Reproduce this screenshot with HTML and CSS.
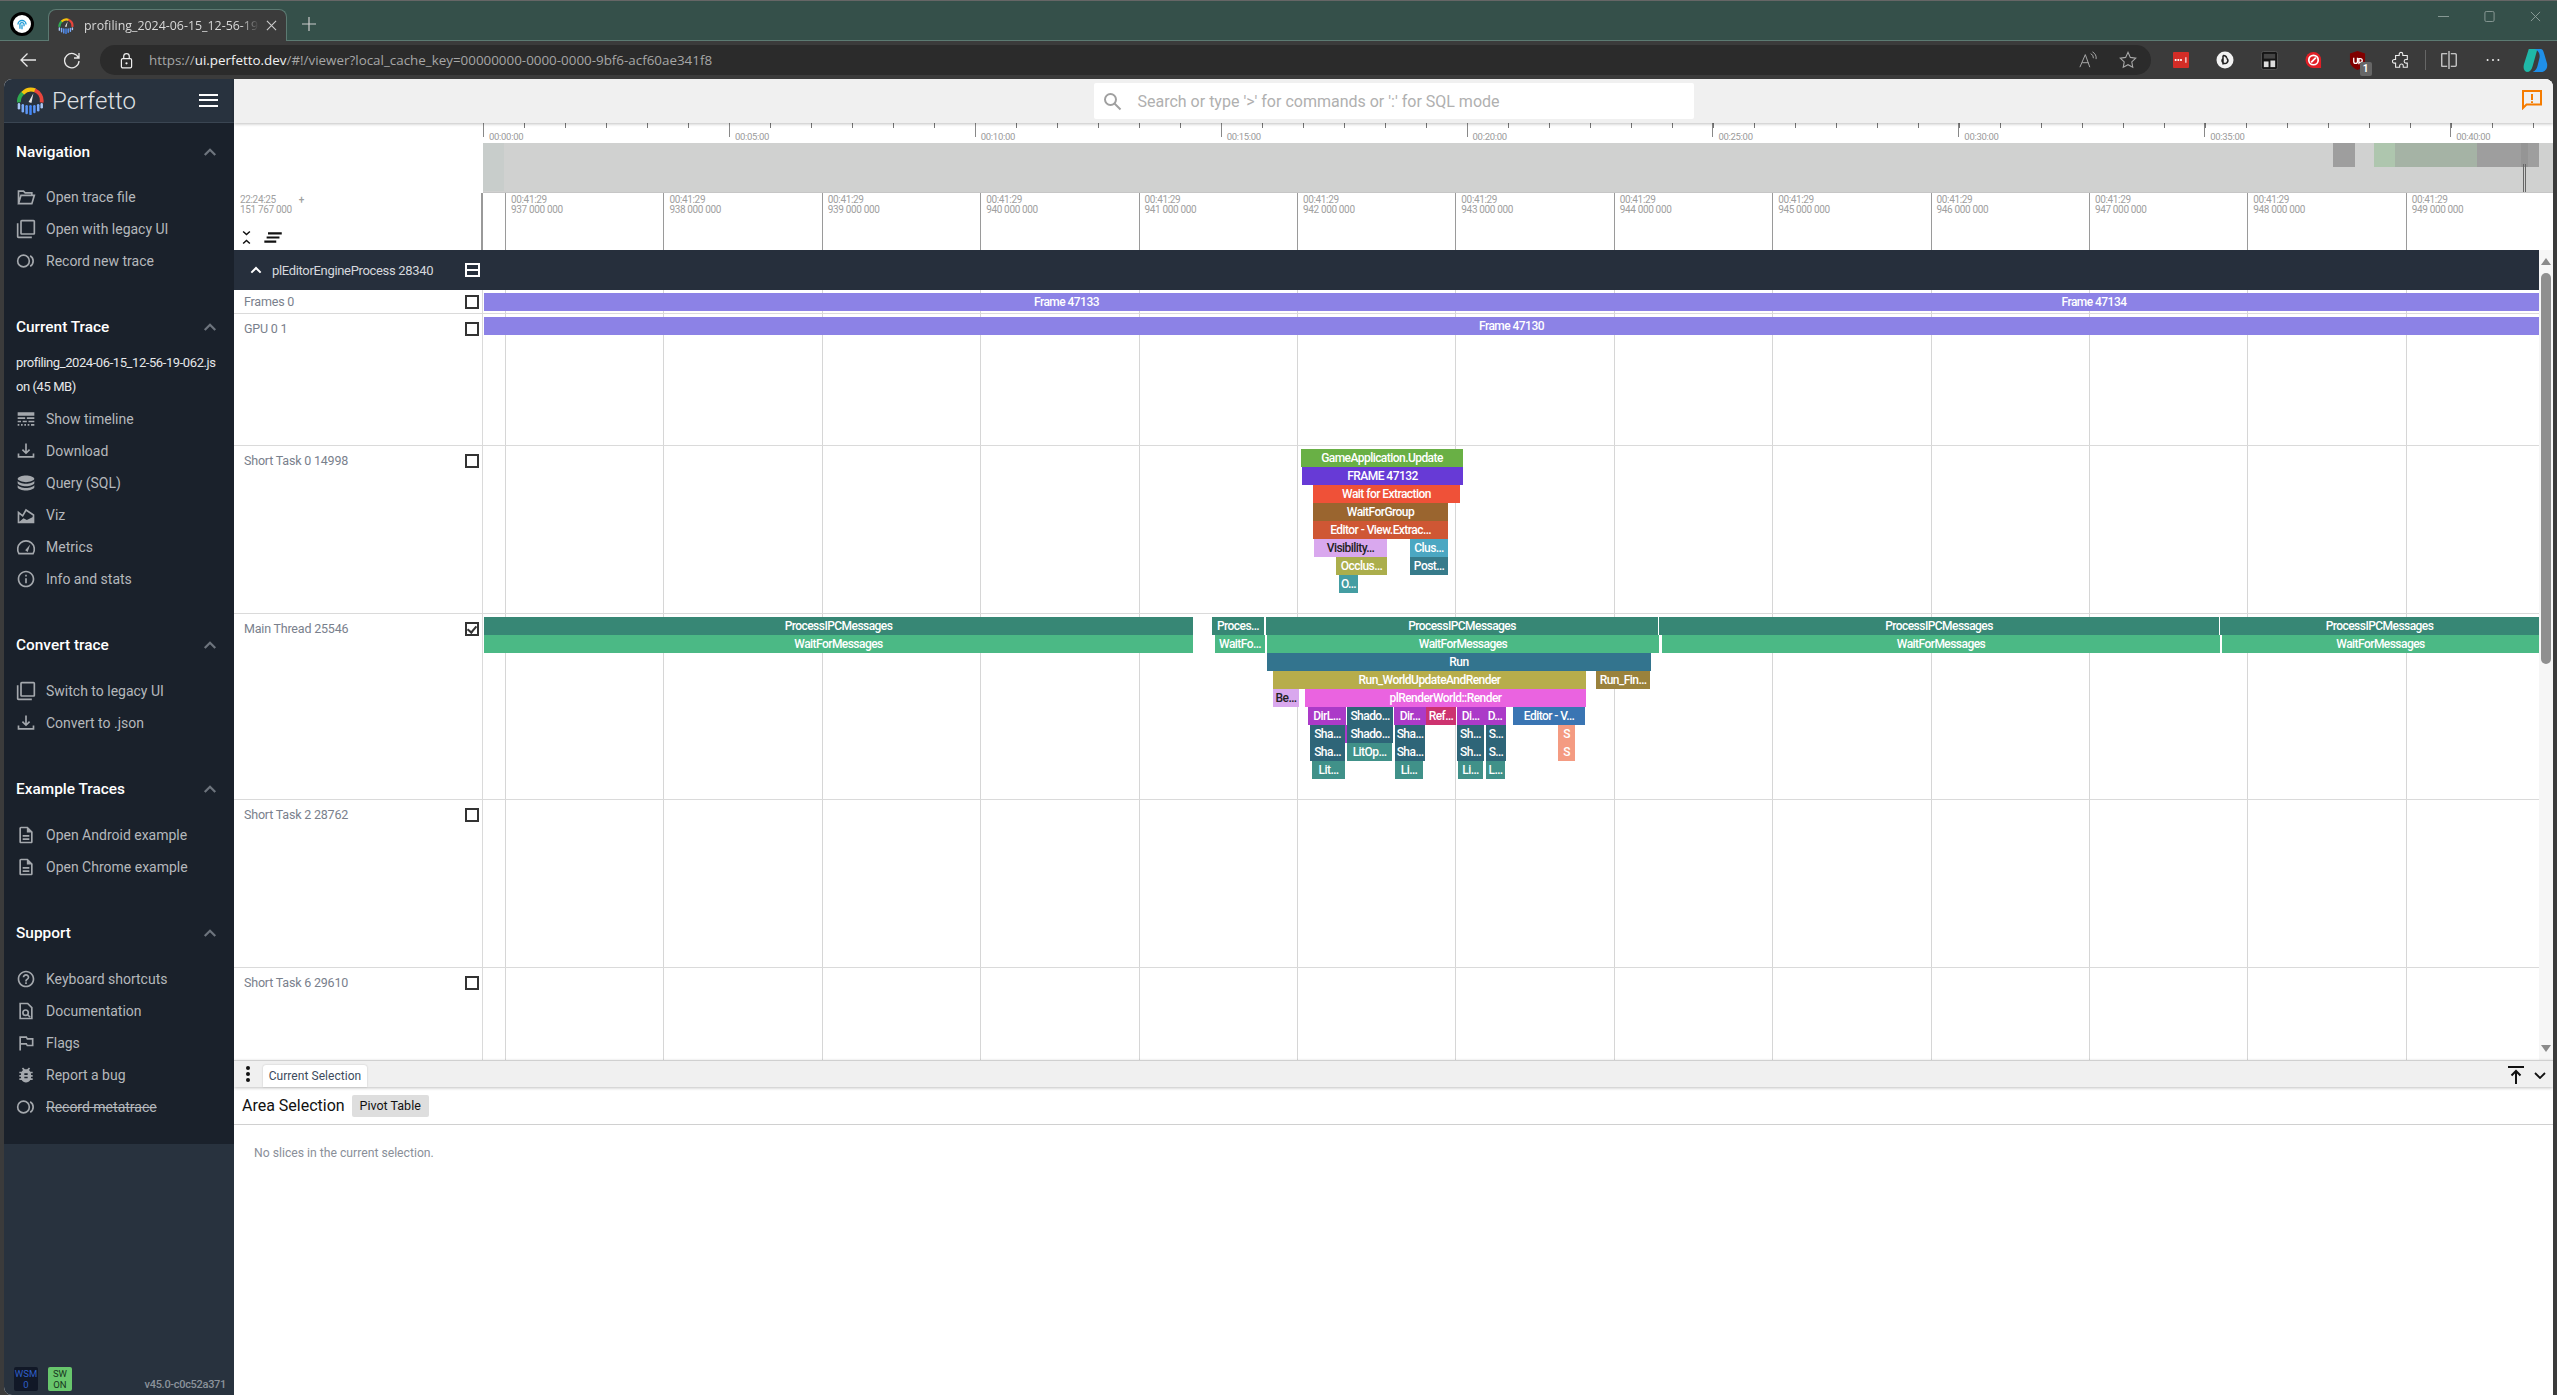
FILE: index.html
```html
<!DOCTYPE html>
<html lang="en">
<head>
<meta charset="utf-8">
<title>profiling_2024-06-15_12-56-19-062.json - Perfetto</title>
<link rel="stylesheet" href="styles.css">
</head>
<body>
<svg class="sprite" aria-hidden="true">
  <symbol id="i-logo" viewBox="0 0 28 29">
    <path d="M2 16A12 12 0 0 1 7 5.5" fill="none" stroke="#2fa84f" stroke-width="4"/>
    <path d="M6 6.5A12 12 0 0 1 19 3.5" fill="none" stroke="#f4c20d" stroke-width="4"/>
    <path d="M18.5 3.3A12 12 0 0 1 25.5 16" fill="none" stroke="#e8453c" stroke-width="4"/>
    <path d="M12 15.5l5-9 -2 10z" fill="#e8e8e8"/>
    <g stroke-width="2.6" stroke-linecap="round">
      <path d="M2 18v4" stroke="#aac7f5"/><path d="M6 19v6" stroke="#7baaf7"/>
      <path d="M10 20v7" stroke="#5b95f5"/><path d="M14 20v8" stroke="#4285f4"/>
      <path d="M18 20v6" stroke="#5b95f5"/><path d="M22 19v5" stroke="#7baaf7"/><path d="M25.6 18v3" stroke="#aac7f5"/>
    </g>
  </symbol>
  <symbol id="i-folder" viewBox="0 0 24 24"><path d="M3 20V5h6l2 2h8v3M3 20h16l3-10H6z" fill="none" stroke="currentColor" stroke-width="2"/></symbol>
  <symbol id="i-legacy" viewBox="0 0 24 24"><path fill="currentColor" d="M3 5H1v16c0 1.1.9 2 2 2h16v-2H3V5zm18-4H7c-1.1 0-2 .9-2 2v14c0 1.1.9 2 2 2h14c1.1 0 2-.9 2-2V3c0-1.1-.9-2-2-2zm0 16H7V3h14v14z"/></symbol>
  <symbol id="i-record" viewBox="0 0 24 24"><circle cx="9" cy="12" r="7" fill="none" stroke="currentColor" stroke-width="2"/><path d="M17 5.6a7.5 7.5 0 0 1 0 12.8" fill="none" stroke="currentColor" stroke-width="2"/></symbol>
  <symbol id="i-timeline" viewBox="0 0 24 24"><path fill="currentColor" d="M2 4h20v4H2zM2 10h9v2H2zM13 10h9v2h-9zM2 14h4v2H2zM8 14h5v2H8zM15 14h7v2h-7zM2 18h2v2H2zM6 18h2v2H6zM10 18h2v2h-2zM14 18h2v2h-2zM18 18h4v2h-4z"/></symbol>
  <symbol id="i-download" viewBox="0 0 24 24"><path fill="currentColor" d="M20 15v3H4v-3H2v5h20v-5h-2zm-3-4l-1.41-1.41L13 12.17V3h-2v9.17L8.41 9.59 7 11l5 5 5-5z"/></symbol>
  <symbol id="i-db" viewBox="0 0 24 24"><path fill="currentColor" d="M12 3C7.58 3 2 4.79 2 7s5.58 4 10 4 10-1.79 10-4-5.58-4-10-4zM2 9v3c0 2.21 5.58 4 10 4s10-1.79 10-4V9c0 2.21-5.58 4-10 4S2 11.21 2 9zm0 5v3c0 2.21 5.58 4 10 4s10-1.79 10-4v-3c0 2.21-5.58 4-10 4S2 16.21 2 14z"/></symbol>
  <symbol id="i-viz" viewBox="0 0 24 24"><path d="M3 21V9l5 4 4-7 9 6v9z" fill="none" stroke="currentColor" stroke-width="2"/><path d="M3 21l6-5 4 2 8-4v7z" fill="currentColor"/></symbol>
  <symbol id="i-speed" viewBox="0 0 24 24"><path d="M3.5 20a10 10 0 1 1 17 0z" fill="none" stroke="currentColor" stroke-width="2"/><path d="M11 16l6-7-3 9z" fill="currentColor"/></symbol>
  <symbol id="i-info" viewBox="0 0 24 24"><path fill="currentColor" d="M11 7h2v2h-2zm0 4h2v6h-2zm1-9C6.48 2 2 6.48 2 12s4.48 10 10 10 10-4.48 10-10S17.52 2 12 2zm0 18c-4.41 0-8-3.59-8-8s3.59-8 8-8 8 3.59 8 8-3.59 8-8 8z"/></symbol>
  <symbol id="i-doc" viewBox="0 0 24 24"><path fill="currentColor" d="M8 16h8v2H8zm0-4h8v2H8zm6-10H6c-1.1 0-2 .9-2 2v16c0 1.1.9 2 2 2h12c1.1 0 2-.9 2-2V8l-6-6zm4 18H6V4h7v5h5v11z"/></symbol>
  <symbol id="i-help" viewBox="0 0 24 24"><path fill="currentColor" d="M11 18h2v-2h-2v2zm1-16C6.48 2 2 6.48 2 12s4.48 10 10 10 10-4.48 10-10S17.52 2 12 2zm0 18c-4.41 0-8-3.59-8-8s3.59-8 8-8 8 3.59 8 8-3.59 8-8 8zm0-14c-2.21 0-4 1.79-4 4h2c0-1.1.9-2 2-2s2 .9 2 2c0 2-3 1.75-3 5h2c0-2.25 3-2.5 3-5 0-2.21-1.79-4-4-4z"/></symbol>
  <symbol id="i-find" viewBox="0 0 24 24"><path d="M5 3h9l5 5v13H5z" fill="none" stroke="currentColor" stroke-width="2"/><circle cx="11.5" cy="14" r="3.2" fill="none" stroke="currentColor" stroke-width="2"/><path d="M14 16.5l3 3" stroke="currentColor" stroke-width="2"/></symbol>
  <symbol id="i-flag" viewBox="0 0 24 24"><path fill="currentColor" d="M14 6l-1-2H4v17h2v-7h6l1 2h8V6h-7zm5 8h-5l-1-2H6V6h6l1 2h6v6z"/></symbol>
  <symbol id="i-bug" viewBox="0 0 24 24"><path fill="currentColor" d="M20 8h-2.81c-.45-.78-1.07-1.45-1.82-1.96L17 4.41 15.59 3l-2.17 2.17C12.96 5.06 12.49 5 12 5c-.49 0-.96.06-1.41.17L8.41 3 7 4.41l1.62 1.63C7.88 6.55 7.26 7.22 6.81 8H4v2h2.09c-.05.33-.09.66-.09 1v1H4v2h2v1c0 .34.04.67.09 1H4v2h2.81c1.04 1.79 2.97 3 5.19 3s4.15-1.21 5.19-3H20v-2h-2.09c.05-.33.09-.66.09-1v-1h2v-2h-2v-1c0-.34-.04-.67-.09-1H20V8zm-6 8h-4v-2h4v2zm0-4h-4v-2h4v2z"/></symbol>
  <symbol id="i-chev" viewBox="0 0 24 24"><path d="M5 16l7-7 7 7" fill="none" stroke="currentColor" stroke-width="3"/></symbol>
</svg>

<header class="tabstrip">
  <div class="profile"><svg viewBox="0 0 24 24" width="14" height="14"><path d="M5 13a7 7 0 0 1 14 0M8.5 20v-7a3.5 3.5 0 0 1 7 0v3M12 21v-8" fill="none" stroke="#1e9ad6" stroke-width="2.2"/></svg></div>
  <div class="tab">
    <svg class="tab-logo" width="16" height="16"><use href="#i-logo"/></svg>
    <span class="tab-title">profiling_2024-06-15_12-56-19-0</span>
    <svg class="tab-close" viewBox="0 0 12 12" width="11" height="11"><path d="M1 1l10 10M11 1L1 11" stroke="#ccc" stroke-width="1.2"/></svg>
  </div>
  <svg class="tab-new" viewBox="0 0 14 14" width="14" height="14"><path d="M7 0v14M0 7h14" stroke="#ccc" stroke-width="1.2"/></svg>
  <div class="winctl">
    <svg viewBox="0 0 12 12" width="11" height="11"><path d="M0 6h12" stroke="#8f9f9b"/></svg>
    <svg viewBox="0 0 12 12" width="11" height="11"><rect x="1" y="0.5" width="10" height="11" rx="1.5" fill="none" stroke="#8f9f9b"/></svg>
    <svg viewBox="0 0 12 12" width="11" height="11"><path d="M1 1l10 10M11 1L1 11" stroke="#8f9f9b"/></svg>
  </div>
</header>

<nav class="toolbar">
  <svg class="tb-back" viewBox="0 0 18 18" width="18" height="18"><path d="M17 9H2M8.500 2.500L2 9l6.500 6.500" fill="none" stroke="#e8e8e8" stroke-width="1.300"/></svg>
  <svg class="tb-reload" viewBox="0 0 18 18" width="18" height="18"><path d="M15.500 7A7.200 7.200 0 1 0 16 10M16 2v5h-5" fill="none" stroke="#e8e8e8" stroke-width="1.300"/></svg>
  <div class="address">
    <svg class="lock" viewBox="0 0 14 18" width="13" height="17"><path d="M4 7V4.500a3 3 0 0 1 6 0V7" fill="none" stroke="#eee" stroke-width="1.300"/><rect x="1.500" y="7" width="11" height="10" rx="1.500" fill="none" stroke="#eee" stroke-width="1.300"/><circle cx="7" cy="12" r="1.200" fill="#eee"/></svg>
    <span class="url"><span class="url-dim">https://</span>ui.perfetto.dev<span class="url-dim">/#!/viewer?local_cache_key=00000000-0000-0000-9bf6-acf60ae341f8</span></span>
    <svg class="addr-read" viewBox="0 0 20 20" width="18" height="18"><path d="M1 18L7 4l5 14M3.500 13h7M13 3a5 5 0 0 1 3 5M15 1a8 8 0 0 1 4 8" fill="none" stroke="#a8a8a8" stroke-width="1.100"/></svg>
    <svg class="addr-star" viewBox="0 0 20 20" width="18" height="18"><path d="M10 1.500l2.600 5.600 6 .8-4.400 4.200 1.100 6L10 15.200 4.700 18.100l1.100-6L1.400 7.900l6-.8z" fill="none" stroke="#a8a8a8" stroke-width="1.200"/></svg>
  </div>
  <div class="extensions">
    <svg viewBox="0 0 18 18" width="16" height="18"><rect width="18" height="18" rx="1" fill="#d32d27"/><path d="M3 9h.01M6 9h.01M9 9h.01" stroke="#fff" stroke-width="2.400" stroke-linecap="round"/><path d="M14.500 6v6" stroke="#fff" stroke-width="1.200"/></svg>
    <svg viewBox="0 0 18 18" width="18" height="18"><circle cx="9" cy="9" r="8.500" fill="#f2f2f2"/><path d="M7 4.500v9M7 4.500c3 0 4 2 3.500 3M11 7.500a2.800 3 0 1 1-4 0" fill="none" stroke="#222" stroke-width="1.500"/></svg>
    <svg viewBox="0 0 18 20" width="17" height="19"><rect x="0.500" y="0.500" width="17" height="19" rx="2" fill="#151515" stroke="#555"/><rect x="3" y="3" width="12" height="5" fill="#444"/><rect x="3" y="11" width="5" height="6" fill="#ddd"/><rect x="10" y="10" width="5" height="7" fill="#ddd"/></svg>
    <svg viewBox="0 0 18 20" width="17" height="19"><path d="M9 1a8 8 0 0 1 8 8c0 3 0 7 0 9H9a8 8 0 0 1 0-17z" fill="#e01f26"/><circle cx="9" cy="9.500" r="5" fill="none" stroke="#fff" stroke-width="1.800"/><path d="M6.500 12l5-5" stroke="#fff" stroke-width="1.800"/></svg>
    <div class="ublock"><svg viewBox="0 0 18 20" width="17" height="19"><path d="M9 0l8 2.500V11c0 4-4 7-8 9-4-2-8-5-8-9V2.500z" fill="#800000"/><path d="M5 7v4a2 2 0 0 0 4 0V7M10.500 14V8h1.500a2 2 0 0 1 0 4h-1.500" fill="none" stroke="#fff" stroke-width="1.400"/></svg><span class="badge">1</span></div>
    <svg viewBox="0 0 20 20" width="18" height="18"><path d="M8 3.500a2 2 0 0 1 4 0V5h5v4.500h-1.500a2 2 0 0 0 0 4H17V18h-4.500v-1.500a2 2 0 0 0-4 0V18H4v-4.500H2.500a2 2 0 0 1 0-4H4V5h4z" fill="none" stroke="#eee" stroke-width="1.200"/></svg>
    <span class="tb-sep"></span>
    <svg viewBox="0 0 20 20" width="18" height="18"><path d="M10 0v20M8 3H2v14h6M12 3h5a1 1 0 0 1 1 1v12a1 1 0 0 1-1 1h-5" fill="none" stroke="#eee" stroke-width="1.200"/></svg>
    <svg viewBox="0 0 20 20" width="18" height="18"><path d="M4 10h.01M10 10h.01M16 10h.01" stroke="#eee" stroke-width="2.200" stroke-linecap="round"/></svg>
    <svg viewBox="0 0 26 28" width="25" height="27"><path d="M6 2h9l-5 18c-1 4-3 6-6 6-3-1-4-4-3-8z" fill="#1fb8a8"/><path d="M12 2h6c2 0 3 1 4 5l3 10c1 5-2 9-6 9h-9c3-1 4-3 5-6l2-8c1-4 0-8-5-10z" fill="#1f8fe8"/></svg>
  </div>
</nav>

<div class="page">
  <aside class="sidebar">
    <div class="side-head">
      <svg class="side-logo" width="27" height="28"><use href="#i-logo"/></svg>
      <span class="brand">Perfetto</span>
      <span class="burger"></span>
    </div>
    <div class="side-body">
      <section class="sec first">
        <h2 class="sec-head">Navigation<svg width="18" height="18"><use href="#i-chev"/></svg></h2>
        <ul class="menu">
          <li><svg><use href="#i-folder"/></svg>Open trace file</li>
          <li><svg><use href="#i-legacy"/></svg>Open with legacy UI</li>
          <li><svg><use href="#i-record"/></svg>Record new trace</li>
        </ul>
      </section>
      <section class="sec">
        <h2 class="sec-head tight">Current Trace<svg width="18" height="18"><use href="#i-chev"/></svg></h2>
        <p class="trace-name">profiling_2024-06-15_12-56-19-062.json (45 MB)</p>
        <ul class="menu">
          <li><svg><use href="#i-timeline"/></svg>Show timeline</li>
          <li><svg><use href="#i-download"/></svg>Download</li>
          <li><svg><use href="#i-db"/></svg>Query (SQL)</li>
          <li><svg><use href="#i-viz"/></svg>Viz</li>
          <li><svg><use href="#i-speed"/></svg>Metrics</li>
          <li><svg><use href="#i-info"/></svg>Info and stats</li>
        </ul>
      </section>
      <section class="sec">
        <h2 class="sec-head">Convert trace<svg width="18" height="18"><use href="#i-chev"/></svg></h2>
        <ul class="menu">
          <li><svg><use href="#i-legacy"/></svg>Switch to legacy UI</li>
          <li><svg><use href="#i-download"/></svg>Convert to .json</li>
        </ul>
      </section>
      <section class="sec">
        <h2 class="sec-head">Example Traces<svg width="18" height="18"><use href="#i-chev"/></svg></h2>
        <ul class="menu">
          <li><svg><use href="#i-doc"/></svg>Open Android example</li>
          <li><svg><use href="#i-doc"/></svg>Open Chrome example</li>
        </ul>
      </section>
      <section class="sec">
        <h2 class="sec-head">Support<svg width="18" height="18"><use href="#i-chev"/></svg></h2>
        <ul class="menu">
          <li><svg><use href="#i-help"/></svg>Keyboard shortcuts</li>
          <li><svg><use href="#i-find"/></svg>Documentation</li>
          <li><svg><use href="#i-flag"/></svg>Flags</li>
          <li><svg><use href="#i-bug"/></svg>Report a bug</li>
          <li class="struck"><svg><use href="#i-record"/></svg><s>Record metatrace</s></li>
        </ul>
      </section>
    </div>
    <div class="side-foot">
      <span class="chip chip-wsm">WSM<br>0</span>
      <span class="chip chip-sw">SW<br>ON</span>
      <span class="version">v45.0-c0c52a371</span>
    </div>
  </aside>

  <main class="main">
    <div class="topbar">
      <div class="search">
        <svg viewBox="0 0 20 20" width="20" height="20"><circle cx="8.500" cy="8.500" r="5.500" fill="none" stroke="#a0a0a0" stroke-width="2"/><path d="M12.500 12.500l6 6" stroke="#a0a0a0" stroke-width="2"/></svg>
        <span>Search or type '&gt;' for commands or ':' for SQL mode</span>
      </div>
      <svg class="feedback" viewBox="0 0 20 20" width="20" height="20"><path d="M1 1h18v13.500H4.500L1 18z" fill="none" stroke="#f57c00" stroke-width="2"/><path d="M10 4v6M10 11.200v1.800" stroke="#f57c00" stroke-width="2"/></svg>
    </div>

    <div class="overview">
      <div class="ov-left"></div>
      <div class="ov-right">
        <div class="ticks">
          <div class="major"><span>00:00:00</span></div><div class="major"><span>00:05:00</span></div><div class="major"><span>00:10:00</span></div><div class="major"><span>00:15:00</span></div><div class="major"><span>00:20:00</span></div><div class="major"><span>00:25:00</span></div><div class="major"><span>00:30:00</span></div><div class="major"><span>00:35:00</span></div><div class="major"><span>00:40:00</span></div>
        </div>
        <div class="minimap">
          <i class="mini m-blue" style="--x:0;--w:21"></i>
          <i class="mini m-gray" style="--x:1850;--w:22"></i>
          <i class="mini m-green" style="--x:1891;--w:21"></i>
          <i class="mini m-sage" style="--x:1912;--w:82"></i>
          <i class="mini m-gray" style="--x:1994;--w:44"></i>
          <i class="mini m-dark" style="--x:2038;--w:7"></i>
          <i class="mini m-gray" style="--x:2045;--w:11"></i>
          <i class="viewport"></i>
        </div>
      </div>
    </div>

    <div class="ruler">
      <div class="ruler-left">
        <div class="stamp"><span>22:24:25<br>151 767 000</span><span class="plus">+</span></div>
        <div class="ruler-tools">
          <svg viewBox="0 0 12 18" width="9" height="15"><path d="M1.500 1l4.500 4 4.500-4M1.500 17l4.500-4 4.500 4" fill="none" stroke="#111" stroke-width="2"/></svg>
          <svg viewBox="0 0 20 12" width="19" height="11"><path d="M4 1.500h15M2.500 6h14M0 10.500h13" stroke="#111" stroke-width="2.200"/></svg>
        </div>
      </div>
      <div class="ruler-right">
        <div class="rmark">00:41:29<br>937 000 000</div><div class="rmark">00:41:29<br>938 000 000</div><div class="rmark">00:41:29<br>939 000 000</div><div class="rmark">00:41:29<br>940 000 000</div><div class="rmark">00:41:29<br>941 000 000</div><div class="rmark">00:41:29<br>942 000 000</div><div class="rmark">00:41:29<br>943 000 000</div><div class="rmark">00:41:29<br>944 000 000</div><div class="rmark">00:41:29<br>945 000 000</div><div class="rmark">00:41:29<br>946 000 000</div><div class="rmark">00:41:29<br>947 000 000</div><div class="rmark">00:41:29<br>948 000 000</div><div class="rmark">00:41:29<br>949 000 000</div>
      </div>
    </div>

    <div class="viewer">
      <div class="tracks">
        <div class="group">
          <div class="group-shell">
            <svg class="group-chev" width="16" height="16"><use href="#i-chev"/></svg>
            <span class="group-title">plEditorEngineProcess 28340</span>
            <span class="group-check"></span>
          </div>
        </div>

        <div class="track t-frames">
          <div class="shell up"><span>Frames 0</span><b class="check"></b></div>
          <div class="canvas">
            <div class="slice c-frame" style="--x:1;--w:1165;--r:0">Frame 47133</div>
            <div class="slice c-frame" style="--x:1166;--w:890;--r:0">Frame 47134</div>
          </div>
        </div>

        <div class="track t-gpu">
          <div class="shell"><span>GPU 0 1</span><b class="check"></b></div>
          <div class="canvas">
            <div class="slice c-frame" style="--x:1;--w:2055;--r:0">Frame 47130</div>
          </div>
        </div>

        <div class="track t-task">
          <div class="shell"><span>Short Task 0 14998</span><b class="check"></b></div>
          <div class="canvas">
            <div class="slice c-game" style="--x:818;--w:162;--r:0">GameApplication.Update</div>
            <div class="slice c-purple" style="--x:819;--w:161;--r:1">FRAME 47132</div>
            <div class="slice c-red" style="--x:830;--w:147;--r:2">Wait for Extraction</div>
            <div class="slice c-brown" style="--x:830;--w:135;--r:3">WaitForGroup</div>
            <div class="slice c-rust" style="--x:830;--w:135;--r:4">Editor - View.Extrac…</div>
            <div class="slice c-lilac" style="--x:831;--w:73;--r:5">Visibility…</div>
            <div class="slice c-sky" style="--x:927;--w:38;--r:5">Clus…</div>
            <div class="slice c-olive" style="--x:853;--w:51;--r:6">Occlus…</div>
            <div class="slice c-teal" style="--x:927;--w:38;--r:6">Post…</div>
            <div class="slice c-aqua" style="--x:856;--w:19;--r:7">O…</div>
          </div>
        </div>

        <div class="track t-main">
          <div class="shell"><span>Main Thread 25546</span><b class="check checked"></b></div>
          <div class="canvas">
            <div class="slice c-ipc" style="--x:1;--w:709;--r:0">ProcessIPCMessages</div>
            <div class="slice c-ipc" style="--x:729;--w:52;--r:0">Proces…</div>
            <div class="slice c-ipc" style="--x:783;--w:392;--r:0">ProcessIPCMessages</div>
            <div class="slice c-ipc" style="--x:1176;--w:560;--r:0">ProcessIPCMessages</div>
            <div class="slice c-ipc" style="--x:1737;--w:319;--r:0">ProcessIPCMessages</div>
            <div class="slice c-wait" style="--x:1;--w:709;--r:1">WaitForMessages</div>
            <div class="slice c-wait" style="--x:732;--w:50;--r:1">WaitFo…</div>
            <div class="slice c-wait" style="--x:784;--w:392;--r:1">WaitForMessages</div>
            <div class="slice c-wait" style="--x:1179;--w:558;--r:1">WaitForMessages</div>
            <div class="slice c-wait" style="--x:1739;--w:317;--r:1">WaitForMessages</div>
            <div class="slice c-run" style="--x:784;--w:384;--r:2">Run</div>
            <div class="slice c-mustard" style="--x:790;--w:313;--r:3">Run_WorldUpdateAndRender</div>
            <div class="slice c-bronze" style="--x:1113;--w:54;--r:3">Run_Fin…</div>
            <div class="slice c-lilac" style="--x:790;--w:26;--r:4">Be…</div>
            <div class="slice c-pink" style="--x:822;--w:281;--r:4">plRenderWorld::Render</div>
            <div class="slice c-violet" style="--x:825;--w:38;--r:5">DirL…</div>
            <div class="slice c-shadow" style="--x:864;--w:46;--r:5">Shado…</div>
            <div class="slice c-violet" style="--x:911;--w:32;--r:5">Dir…</div>
            <div class="slice c-rose" style="--x:943;--w:30;--r:5">Ref…</div>
            <div class="slice c-violet" style="--x:974;--w:27;--r:5">Di…</div>
            <div class="slice c-violet" style="--x:1001;--w:22;--r:5">D…</div>
            <div class="slice c-blue" style="--x:1030;--w:72;--r:5">Editor - V…</div>
            <div class="slice c-shadow" style="--x:827;--w:35;--r:6">Sha…</div>
            <div class="slice c-violet" style="--x:862;--w:2;--r:6"></div>
            <div class="slice c-shadow" style="--x:864;--w:46;--r:6">Shado…</div>
            <div class="slice c-shadow" style="--x:912;--w:30;--r:6">Sha…</div>
            <div class="slice c-shadow" style="--x:974;--w:27;--r:6">Sh…</div>
            <div class="slice c-shadow" style="--x:1003;--w:20;--r:6">S…</div>
            <div class="slice c-salmon" style="--x:1075;--w:17;--r:6">S</div>
            <div class="slice c-shadow" style="--x:827;--w:35;--r:7">Sha…</div>
            <div class="slice c-lit" style="--x:864;--w:45;--r:7">LitOp…</div>
            <div class="slice c-shadow" style="--x:912;--w:30;--r:7">Sha…</div>
            <div class="slice c-shadow" style="--x:974;--w:27;--r:7">Sh…</div>
            <div class="slice c-shadow" style="--x:1003;--w:20;--r:7">S…</div>
            <div class="slice c-salmon" style="--x:1075;--w:17;--r:7">S</div>
            <div class="slice c-lit" style="--x:829;--w:33;--r:8">Lit…</div>
            <div class="slice c-lit" style="--x:912;--w:28;--r:8">Li…</div>
            <div class="slice c-lit" style="--x:975;--w:25;--r:8">Li…</div>
            <div class="slice c-lit" style="--x:1003;--w:19;--r:8">L…</div>
          </div>
        </div>

        <div class="track t-task">
          <div class="shell"><span>Short Task 2 28762</span><b class="check"></b></div>
          <div class="canvas"></div>
        </div>

        <div class="track t-task">
          <div class="shell"><span>Short Task 6 29610</span><b class="check"></b></div>
          <div class="canvas"></div>
        </div>
      </div>
      <div class="scrollbar">
        <span class="arrow arrow-up"></span>
        <span class="thumb"></span>
        <span class="arrow arrow-down"></span>
      </div>
    </div>

    <div class="panel-tabs">
      <svg class="dots" viewBox="0 0 6 18" width="6" height="18"><circle cx="3" cy="3" r="2" fill="#111"/><circle cx="3" cy="9" r="2" fill="#111"/><circle cx="3" cy="15" r="2" fill="#111"/></svg>
      <div class="panel-tab">Current Selection</div>
      <div class="panel-actions">
        <svg viewBox="0 0 16 18" width="16" height="18"><path d="M0 1h16M8 18V5M3.500 9.500L8 5l4.500 4.500" fill="none" stroke="#111" stroke-width="2"/></svg>
        <svg viewBox="0 0 12 7" width="12" height="7"><path d="M1 1l5 5 5-5" fill="none" stroke="#111" stroke-width="1.800"/></svg>
      </div>
    </div>
    <div class="details">
      <div class="details-head"><h3>Area Selection</h3><button class="pivot">Pivot Table</button></div>
      <p class="empty">No slices in the current selection.</p>
    </div>
  </main>
</div>
</body>
</html>
```
FILE: styles.css
```css
* { box-sizing: border-box; }
html, body { height: 100%; margin: 0; }
body {
  display: flex;
  flex-direction: column;
  overflow: hidden;
  background: #3b3b3b;
  font-family: Roboto, "Liberation Sans", sans-serif;
}
.sprite { display: none; }

/* Browser chrome */
.tabstrip {
  flex: 0 0 41px;
  display: flex;
  align-items: flex-end;
  background: #35504a;
  border-top: 1px solid #666;
  border-bottom: 1px solid #5c7a72;
  position: relative;
}
.profile {
  width: 24px; height: 24px;
  margin: 0 14px 4px 10px;
  border-radius: 50%;
  background: #fff;
  border: 3px solid #000;
  display: flex; align-items: center; justify-content: center;
}
.tab {
  width: 239px; height: 32px;
  margin-bottom: -1px;
  display: flex; align-items: center;
  padding: 0 10px 0 10px;
  background: #3b3b3b;
  border: 1px solid #5c7a72;
  border-bottom: 0;
  border-radius: 8px 8px 0 0;
  position: relative;
}
.tab-logo { flex: none; margin-left: -1px; }
.tab-title {
  width: 175px;
  margin-left: 10px;
  white-space: nowrap;
  font: 12.4px "Open Sans", sans-serif;
  color: #d8d8d8;
  -webkit-mask-image: linear-gradient(to right, #000 90%, transparent);
  mask-image: linear-gradient(to right, #000 90%, transparent);
}
.tab-close { margin-left: 7px; flex: none; }
.tab-new { margin: 0 0 9px 15px; }
.winctl {
  margin: 0 0 18px auto;
  display: flex;
  gap: 35px;
  padding-right: 16px;
  align-self: flex-end;
}
.toolbar {
  flex: 0 0 38px;
  display: flex;
  align-items: center;
  background: #3b3b3b;
}
.tb-back { margin-left: 19px; }
.tb-reload { margin-left: 26px; }
.address {
  width: 2051px; height: 30px;
  margin-left: 19px;
  display: flex; align-items: center;
  background: #2b2b2b;
  border-radius: 15px;
}
.lock { margin-left: 20px; flex: none; }
.url { margin-left: 16px; font: 13.400px "Open Sans", sans-serif; color: #f2f2f2; white-space: nowrap; }
.url-dim { color: #a6a6a6; }
.addr-read { margin-left: auto; }
.addr-star { margin: 0 14px 0 22px; }
.extensions {
  flex: 1;
  display: grid;
  grid-template-columns: repeat(6, 44px) 4px 44px 44px 40px;
  justify-items: center;
  align-items: center;
  padding-left: 8px;
}
.ublock { position: relative; display: flex; }
.badge {
  position: absolute; right: -6px; bottom: -6px;
  min-width: 12px; height: 14px;
  background: #666; color: #fff;
  font: 700 10px/14px Roboto, sans-serif;
  text-align: center; border-radius: 2px;
}
.tb-sep { width: 1px; height: 20px; background: #666; }

/* Page */
.page {
  flex: 1;
  min-height: 0;
  display: flex;
  margin: 0 4px;
  border-radius: 8px 8px 0 8px;
  overflow: hidden;
  background: #fff;
}

/* Sidebar */
.sidebar {
  flex: 0 0 230px;
  display: flex;
  flex-direction: column;
  background: #28323e;
}
.side-head {
  flex: 0 0 44px;
  display: flex;
  align-items: center;
  padding: 0 16px 0 13px;
  border-bottom: 1px solid #3a4552;
}
.side-logo { flex: none; }
.brand {
  margin-left: 8px;
  font-size: 24px;
  font-weight: 300;
  color: #dfe1e4;
}
.burger {
  margin-left: auto;
  width: 19px; height: 13px;
  border-top: 2.500px solid #fff;
  border-bottom: 2.500px solid #fff;
  position: relative;
}
.burger::after {
  content: "";
  position: absolute; left: 0; right: 0; top: 2.500px;
  height: 2.500px; background: #fff;
}
.side-body { background: #1a212b; padding-bottom: 21px; }
.sec { padding: 36px 0 0; }
.sec.first { padding-top: 15px; }
.sec.first .sec-head { margin-bottom: 15px; }
.sec-head {
  height: 28px;
  margin: 0 0 16px;
  padding: 0 15px 0 12px;
  display: flex; align-items: center; justify-content: space-between;
  font-size: 15.400px;
  font-weight: 500;
  color: #fff;
}
.sec-head.tight { margin-bottom: 10px; }
.sec-head svg { color: #6d747d; }
.trace-name {
  margin: 0 0 4px;
  padding: 0 16px 0 12px;
  font-size: 13px;
  line-height: 24px;
  letter-spacing: -.42px;
  color: #e6e7e9;
  word-break: break-all;
}
.menu { list-style: none; margin: 0; padding: 0; }
.menu li {
  height: 32px;
  display: flex; align-items: center;
  padding-left: 12px;
  font-size: 14px;
  color: #b5b8bc;
}
.menu li svg {
  width: 20px; height: 20px;
  margin-right: 10px;
  flex: none;
  color: #a4a8ad;
}
.side-foot {
  margin-top: auto;
  display: flex;
  align-items: flex-end;
  gap: 10px;
  padding: 0 8px 4px 10px;
}
.chip {
  width: 24px; height: 24px;
  border-radius: 2px;
  font-size: 9.500px; line-height: 11px;
  text-align: center;
  padding-top: 1px;
}
.chip-wsm { background: #111827; color: #2f5fc8; }
.chip-sw { background: #68c66c; color: #17351d; }
.version {
  margin-left: auto;
  font-size: 11px; font-weight: 500;
  letter-spacing: -.3px;
  color: #8b929b;
}

/* Main column */
.main {
  flex: 1; min-width: 0;
  display: flex;
  flex-direction: column;
  background: #fff;
}
.topbar {
  flex: 0 0 44px;
  display: grid;
  grid-template-columns: 1fr 600px 1fr;
  align-items: center;
  background: #f0f0f0;
  box-shadow: 0 1px 3px rgba(0,0,0,.25);
  position: relative;
  z-index: 2;
}
.search {
  grid-column: 2;
  height: 36px;
  display: flex; align-items: center;
  padding-left: 8px;
  gap: 16px;
  background: #fff;
  border-radius: 2px;
  font-size: 16px;
  color: #b0b0b0;
}
.feedback { grid-column: 3; justify-self: end; margin: -2px 11px 0 0; }

/* Overview */
.overview { flex: 0 0 70px; display: flex; }
.ov-left { flex: 0 0 249px; }
.ov-right { flex: 1; display: flex; flex-direction: column; padding-right: 14px; }
.ticks {
  flex: 0 0 20px;
  display: flex;
  background: repeating-linear-gradient(to right, #777 0 1px, transparent 1px 41px) 0 0 / 100% 5px no-repeat;
}
.major {
  flex: 0 0 245.9px;
  height: 14px;
  border-left: 1px solid #888;
  position: relative;
}
.major span {
  position: absolute;
  left: 5px; top: 8px;
  font-size: 9.500px;
  line-height: 12px;
  letter-spacing: -.3px;
  color: #9a9a9a;
}
.minimap {
  flex: 1;
  position: relative;
  background: #d0d1d0;
  border-bottom: 1px solid #c6c6c6;
}
.mini {
  position: absolute;
  top: 0; height: 24px;
  left: calc(var(--x) * 1px);
  width: calc(var(--w) * 1px);
}
.m-gray { background: #9e9e9e; }
.m-dark { background: #959595; }
.m-green { background: #aec6ae; }
.m-sage { background: #a5b3a5; }
.m-blue { height: 48px; background: #c8cdcb; }
.viewport {
  position: absolute;
  left: 2040px; top: 21px; bottom: 0;
  width: 3px;
  border-left: 1px solid #666;
  border-right: 1px solid #666;
}

/* Time ruler */
.ruler { flex: 0 0 57px; display: flex; }
.ruler-left {
  flex: 0 0 249px;
  display: flex; flex-direction: column;
  padding: 2px 0 0 6px;
  border-right: 2px solid #999;
}
.stamp {
  display: flex; gap: 7px;
  font-size: 10px; line-height: 10px;
  letter-spacing: -.35px;
  color: #a0a0a0;
}
.plus { font-weight: 500; }
.ruler-tools {
  margin-top: auto;
  padding: 0 0 5px 2px;
  display: flex; align-items: center; gap: 13px;
}
.ruler-right {
  flex: 1;
  display: flex;
  padding-left: 22px;
  overflow: hidden;
}
.rmark {
  flex: 0 0 158.400px;
  border-left: 1px solid #9a9a9a;
  padding: 2px 0 0 5px;
  font-size: 10px; line-height: 10px;
  letter-spacing: -.35px;
  color: #a0a0a0;
}

/* Tracks */
.viewer { flex: 1; min-height: 0; display: flex; }
.tracks { flex: 1; min-width: 0; overflow: hidden; }
.group {
  height: 40px;
  display: flex;
  background: #262f3c;
}
.group-shell {
  flex: 0 0 249px;
  display: flex; align-items: center;
  padding: 0 3px 0 14px;
}
.group-chev { color: #fff; }
.group-title {
  margin-left: 8px;
  font-size: 13px;
  letter-spacing: -.33px;
  color: #d5d8dc;
}
.group-check {
  margin-left: auto;
  width: 15px; height: 14px;
  background: linear-gradient(#fff, #fff) center / 100% 2px no-repeat;
  border: 2px solid #fff;
}
.track {
  display: flex;
  border-bottom: 1px solid #dadada;
}
.t-frames { height: 24px; }
.t-gpu { height: 132px; }
.t-task { height: 168px; }
.t-main { height: 186px; }
.shell {
  flex: 0 0 249px;
  display: flex;
  align-items: flex-start;
  justify-content: space-between;
  padding: 7px 3px 0 10px;
  border-right: 1px solid #dadada;
  font-size: 12.500px;
  line-height: 16px;
  letter-spacing: -.2px;
  color: #79808c;
}
.shell.up { padding-top: 4px; }
.check {
  width: 14px; height: 14px;
  margin-top: 1px;
  border: 2px solid #333;
}
.checked {
  background: #fff;
  position: relative;
}
.checked::after {
  content: "";
  position: absolute; left: 2px; top: 0;
  width: 4px; height: 7px;
  border: solid #333;
  border-width: 0 2px 2px 0;
  transform: rotate(40deg);
}
.canvas {
  flex: 1;
  position: relative;
  background: repeating-linear-gradient(to right, #d6d6d6 0 1px, transparent 1px 158.400px) 22px 0;
}
.slice {
  position: absolute;
  left: calc(var(--x) * 1px);
  top: calc(var(--r) * 18px + 3px);
  width: calc(var(--w) * 1px);
  height: 18px;
  overflow: hidden;
  white-space: nowrap;
  text-align: center;
  font-size: 12px;
  font-weight: 500;
  line-height: 18px;
  letter-spacing: -.55px;
  color: #fff;
}
.c-frame { background: #8c82e6; }
.c-game { background: #69b045; }
.c-purple { background: #673ad6; }
.c-red { background: #ef5138; }
.c-brown { background: #9a652f; }
.c-rust { background: #cf5734; }
.c-lilac { background: #d9a8ee; color: #222; }
.c-sky { background: #4ba7c2; }
.c-olive { background: #abae4c; }
.c-teal { background: #377b8b; }
.c-aqua { background: #449da2; }
.c-ipc { background: #378775; }
.c-wait { background: #4bb985; }
.c-run { background: #33748e; }
.c-mustard { background: #b7ad4b; }
.c-bronze { background: #9a823c; }
.c-pink { background: #ea63e0; }
.c-violet { background: #ab3ac8; }
.c-shadow { background: #2e6578; }
.c-rose { background: #cd3270; }
.c-blue { background: #3a75b3; }
.c-salmon { background: #f49b82; }
.c-lit { background: #409189; }

/* Scrollbar */
.scrollbar {
  flex: 0 0 14px;
  display: flex; flex-direction: column; align-items: center;
  background: #f6f6f6;
  padding: 8px 0;
}
.arrow { width: 0; height: 0; border: 5px solid transparent; }
.arrow-up { border-top: 0; border-bottom: 7px solid #8a8a8a; }
.arrow-down { border-bottom: 0; border-top: 7px solid #8a8a8a; margin-top: auto; }
.thumb { width: 10px; height: 391px; margin-top: 8px; border-radius: 5px; background: #8f8f8f; }

/* Bottom panel */
.panel-tabs {
  flex: 0 0 27px;
  display: flex; align-items: flex-end;
  background: #f0f0f0;
  border-top: 1px solid #d0d0d0;
  box-shadow: 0 1px 3px rgba(0,0,0,.25);
  position: relative;
}
.dots { margin: 0 12px 4px 11px; }
.panel-tab {
  width: 104px; height: 22px;
  text-align: center;
  background: #fff;
  border-radius: 3px 3px 0 0;
  box-shadow: 0 0 2px rgba(0,0,0,.2);
  font-size: 12px; line-height: 22px;
  letter-spacing: .05px;
  color: #3c4b5d;
}
.panel-actions {
  margin: 0 7px 3px auto;
  display: flex; align-items: center; gap: 10px;
}
.details { flex: 0 0 308px; background: #fff; }
.details-head {
  height: 38px;
  display: flex; align-items: center;
  gap: 7px;
  padding-left: 8px;
  border-bottom: 1px solid #d0d0d0;
}
.details-head h3 { margin: 0; font-size: 16px; font-weight: 400; color: #111; }
.pivot {
  height: 22px; width: 77px;
  padding: 0;
  border: 0;
  border-radius: 2px;
  background: #dedede;
  font: 12.500px Roboto, sans-serif;
  color: #111;
}
.empty {
  margin: 0;
  padding: 20px 0 0 20px;
  font-size: 12.200px;
  line-height: 16px;
  color: #8a8f99;
}
```
